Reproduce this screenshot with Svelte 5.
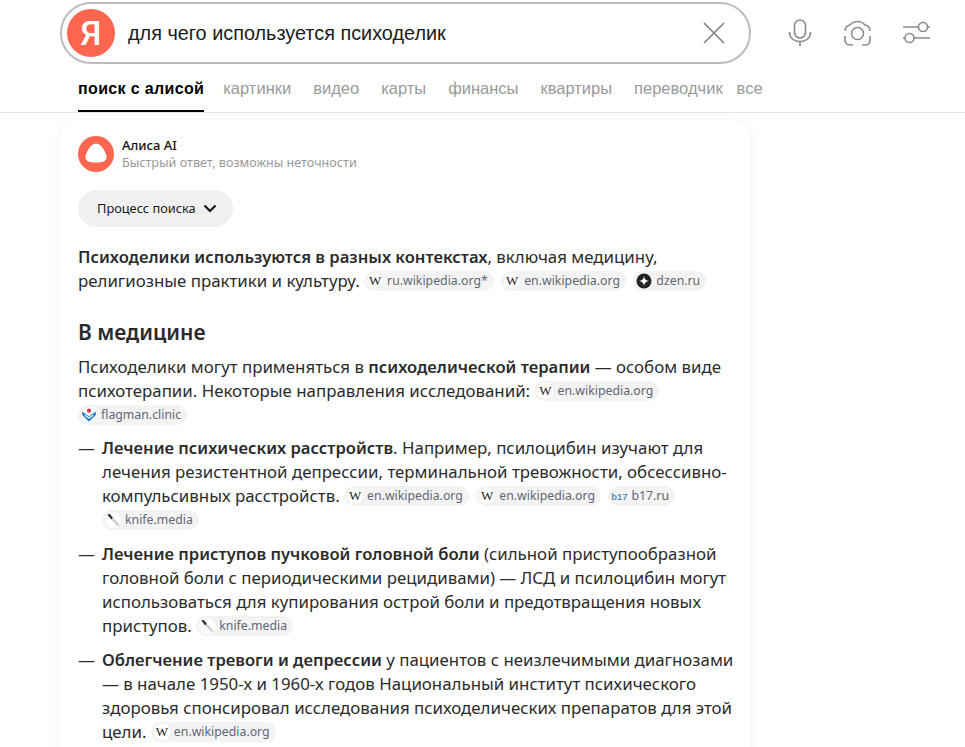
<script lang="ts">
  const tabs = ["картинки", "видео", "карты", "финансы", "квартиры", "переводчик"];
</script>

{#snippet wiki(label: string)}
  <span class="chip"><span class="fav wiki">W</span>{label}</span>
{/snippet}

{#snippet knife()}
  <span class="chip">
    <span class="fav">
      <svg width="16" height="16" viewBox="0 0 14 14">
        <path d="M2 2.5 L4 1.5 L7 5 L5.5 6.5 Z" fill="#333" />
        <path d="M5.5 6.5 L7 5 L12.5 11 Q12.5 12.5 11 12 Z" fill="#c4ccd4" />
      </svg>
    </span>knife.media
  </span>
{/snippet}

<div class="page">
  <header class="head">
    <div class="search-row">
      <div class="search">
        <div class="logo">Я</div>
        <div class="query">для чего используется психоделик</div>
        <svg class="clear" width="22" height="22" viewBox="0 0 22 22">
          <path d="M1 1 L21 21 M21 1 L1 21" stroke="#7a7a7a" stroke-width="1.5" fill="none" />
        </svg>
      </div>
      <div class="tools">
        <svg width="24" height="28" viewBox="0 0 24 28" fill="none" stroke="#8c8c8c" stroke-width="1.6">
          <rect x="6.5" y="1" width="11" height="18" rx="5.5" />
          <path d="M1.5 13 C1.5 19 6 22.5 12 22.5 C18 22.5 22.5 19 22.5 13 M12 22.5 V27" />
        </svg>
        <svg width="27" height="26" viewBox="0 0 27 26" fill="none" stroke="#8c8c8c" stroke-width="1.6">
          <circle cx="13.5" cy="13.5" r="6" />
          <path d="M1 11 C1 7 3 5.5 6 5 C8 2.5 9.5 1.5 13.5 1.5 C17.5 1.5 19 2.5 21 5 C24 5.5 26 7 26 11 M26 16 V20 Q26 25 21 25 H18 M9 25 H6 Q1 25 1 20 V16" />
        </svg>
        <svg width="28" height="24" viewBox="0 0 28 24" fill="none" stroke="#8c8c8c" stroke-width="1.6">
          <circle cx="20" cy="6" r="4.5" />
          <circle cx="6.5" cy="17" r="4.5" />
          <path d="M0 6 H15.5 M24.5 6 H27 M0 17 H2 M11 17 H27" />
        </svg>
      </div>
    </div>
    <nav class="tabs">
      <span class="tab active">поиск с алисой</span>
      {#each tabs as tab}
        <span class="tab">{tab}</span>
      {/each}
      <span class="tab more">все</span>
    </nav>
  </header>

  <main class="card">
    <div class="alice">
      <svg width="36" height="36" viewBox="0 0 36 36">
        <circle cx="18" cy="18" r="18" fill="#ff6650" />
        <path d="M18 7.5 C23.5 7.5 28.5 17 28.5 21 C28.5 26 23 26.5 18 26.5 C13 26.5 7.5 26 7.5 21 C7.5 17 12.5 7.5 18 7.5 Z" fill="#fff" />
      </svg>
      <div>
        <div class="alice-name">Алиса AI</div>
        <div class="alice-note">Быстрый ответ, возможны неточности</div>
      </div>
    </div>

    <button class="process">
      Процесс поиска
      <svg width="14" height="9" viewBox="0 0 14 9" fill="none" stroke="#111" stroke-width="2.2">
        <path d="M1.5 1.5 L7 7 L12.5 1.5" />
      </svg>
    </button>

    <p class="lead">
      <b>Психоделики используются в разных контекстах</b>, включая медицину, религиозные практики и культуру.
      {@render wiki("ru.wikipedia.org*")}
      {@render wiki("en.wikipedia.org")}
      <span class="chip"><span class="fav dzen"><svg width="16" height="16" viewBox="0 0 16 16"><circle cx="8" cy="8" r="7.5" fill="#222" /><path d="M8 3 Q8.4 7.6 13 8 Q8.4 8.4 8 13 Q7.6 8.4 3 8 Q7.6 7.6 8 3 Z" fill="#fff" /></svg></span>dzen.ru</span>
    </p>

    <h2>В медицине</h2>

    <p>
      Психоделики могут применяться в <b>психоделической терапии</b> — особом виде психотерапии. Некоторые направления исследований:
      {@render wiki("en.wikipedia.org")}
      <span class="chip">
        <span class="fav">
          <svg width="16" height="16" viewBox="0 0 14 14">
            <path d="M1 4 L7 8 L13 4 L13 7 L7 13 L1 7 Z" fill="#2f7fd0" />
            <path d="M3.5 7.2 L7 9.6 L10.5 7.2" stroke="#fff" stroke-width="1" fill="none" />
            <circle cx="7" cy="3.2" r="1.8" fill="#e0324b" />
          </svg>
        </span>flagman.clinic
      </span>
    </p>

    <ul>
      <li>
        <b>Лечение психических расстройств</b>. Например, псилоцибин изучают для лечения резистентной депрессии, терминальной тревожности, обсессивно-компульсивных расстройств.
        {@render wiki("en.wikipedia.org")}
        {@render wiki("en.wikipedia.org")}
        <span class="chip"><span class="fav b17">b17</span>b17.ru</span>
        {@render knife()}
      </li>
      <li>
        <b>Лечение приступов пучковой головной боли</b> (сильной приступообразной головной боли с периодическими рецидивами) — ЛСД и псилоцибин могут использоваться для купирования острой боли и предотвращения новых приступов.
        {@render knife()}
      </li>
      <li>
        <b>Облегчение тревоги и депрессии</b> у пациентов с неизлечимыми диагнозами — в начале 1950-х и 1960-х годов Национальный институт психического здоровья спонсировал исследования психоделических препаратов для этой цели.
        {@render wiki("en.wikipedia.org")}
      </li>
    </ul>
  </main>
</div>

<style>
  :global(body) {
    margin: 0;
    background: #fff;
    overflow: hidden;
  }

  .page {
    height: 747px;
    overflow: hidden;
    font-family: "Noto Sans", "Open Sans", sans-serif;
    color: #2b2b2b;
  }

  .head {
    border-bottom: 1px solid #e6e6e6;
  }

  .search-row {
    display: flex;
    align-items: center;
    padding: 2px 0 0 60px;
  }

  .search {
    box-sizing: border-box;
    width: 691px;
    height: 62px;
    display: flex;
    align-items: center;
    border: 2px solid #bcbcbc;
    border-radius: 31px;
    padding: 0 24px 0 5px;
  }

  .logo {
    width: 48px;
    height: 48px;
    border-radius: 50%;
    background: #ff6650;
    color: #fff;
    font: 500 34px/48px Roboto, sans-serif;
    text-align: center;
    flex-shrink: 0;
  }

  .query {
    flex: 1;
    margin-left: 13px;
    font: 19.85px "Liberation Sans", Arial, sans-serif;
    color: #1a1a1a;
  }

  .tools {
    display: flex;
    align-items: center;
    margin-left: 37px;
    gap: 32px;
  }

  .tabs {
    display: flex;
    gap: 22px;
    height: 48px;
    padding-left: 78px;
    font: 16.5px/49px "Liberation Sans", Arial, sans-serif;
    color: #9a9a9a;
  }

  .tab {
    box-sizing: border-box;
    height: 48px;
  }

  .active {
    font-size: 16px;
    line-height: 50px;
    font-weight: 700;
    color: #000;
    letter-spacing: 0.35px;
    border-bottom: 2px solid #000;
    margin-right: -3px;
  }

  .more {
    margin-left: -8px;
  }

  .card {
    box-sizing: border-box;
    width: 691px;
    margin: 7px 0 0 60px;
    padding: 16px 10px 18px 18px;
    border-radius: 20px;
    box-shadow: 0 2px 14px rgba(0, 0, 0, 0.06);
    font-size: 16.85px;
    line-height: 24px;
  }

  .alice {
    display: flex;
    align-items: center;
    gap: 8px;
  }

  .alice-name {
    font-size: 13px;
    line-height: 18px;
    font-weight: 500;
    color: #111;
  }

  .alice-note {
    font-size: 12.6px;
    line-height: 18px;
    color: #999;
  }

  .process {
    display: flex;
    align-items: center;
    gap: 7px;
    height: 37px;
    margin-top: 18px;
    padding: 0 16px 1px 19px;
    border: 0;
    border-radius: 19px;
    background: #f0f0f0;
    font: 12.8px "Noto Sans", sans-serif;
    color: #1a1a1a;
  }

  p {
    margin: 0;
  }

  .lead {
    margin-top: 18px;
  }

  h2 {
    margin: 26px 0 10px;
    font-size: 21px;
    line-height: 26px;
    font-weight: 600;
  }

  b {
    font-size: 16.6px;
    font-weight: 600;
  }

  ul {
    list-style: none;
    margin: 9px 0 0;
    padding: 0;
  }

  li {
    position: relative;
    padding-left: 24px;
    margin-bottom: 10px;
  }

  li::before {
    content: "—";
    position: absolute;
    left: 0;
  }

  .chip {
    display: inline-flex;
    align-items: center;
    gap: 4px;
    height: 20px;
    margin-right: 3px;
    padding: 0 6px 0 3px;
    border-radius: 10px;
    background: #f3f3f3;
    font-size: 12.3px;
    line-height: 20px;
    color: #5f6773;
    vertical-align: middle;
    transform: translateY(-1px);
  }

  .fav {
    display: inline-flex;
    align-items: center;
    justify-content: center;
    width: 16px;
    height: 16px;
    border-radius: 50%;
    background: #fff;
  }

  .wiki {
    font: 13px "Liberation Serif", serif;
    color: #222;
  }

  .dzen {
    background: none;
  }

  .b17 {
    background: none;
    font: 700 9.5px "Liberation Sans", sans-serif;
    color: #5b8fc0;
  }
</style>
